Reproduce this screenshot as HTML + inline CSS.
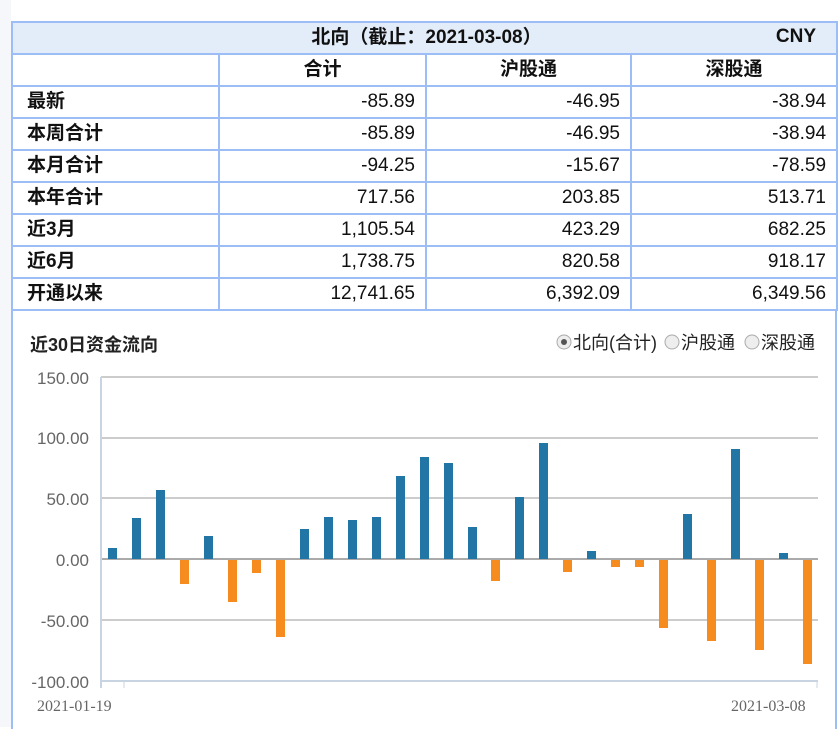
<!DOCTYPE html>
<html><head><meta charset="utf-8"><style>
body{margin:0;width:840px;height:727px;background:#fff;font-family:"Liberation Sans","Noto Sans CJK SC",sans-serif;overflow:hidden;position:relative}
.lft{position:absolute;left:0;top:0;width:11px;height:727px;background:#f5f7fb}
table{position:absolute;left:11px;top:21px;border-collapse:collapse;width:825px;table-layout:fixed;font-size:19px;color:#111}
td{border:2px solid #9cbdf5;height:32px;padding:0 10px;text-align:right;box-sizing:border-box;line-height:28px;white-space:nowrap}
td:first-child{text-align:left;font-weight:bold;padding-left:14px}
.h td{background:#e3ecf9;font-weight:bold;font-size:19px}
.c td{text-align:center;font-weight:bold}
.box{position:absolute;left:11px;top:309px;width:822px;height:420px;border-left:2px solid #9cbdf5;border-right:2px solid #9cbdf5}
</style></head><body>
<div class="lft"></div>
<table>
<colgroup><col style="width:207px"><col style="width:207px"><col style="width:205px"><col style="width:206px"></colgroup>
<tr class="h"><td colspan="4" style="text-align:center;position:relative">北向（截止：2021-03-08）<span style="position:absolute;right:20px;top:0">CNY</span></td></tr>
<tr class="c"><td></td><td style="text-align:center">合计</td><td style="text-align:center">沪股通</td><td style="text-align:center">深股通</td></tr>
<tr><td>最新</td><td>-85.89</td><td>-46.95</td><td>-38.94</td></tr>
<tr><td>本周合计</td><td>-85.89</td><td>-46.95</td><td>-38.94</td></tr>
<tr><td>本月合计</td><td>-94.25</td><td>-15.67</td><td>-78.59</td></tr>
<tr><td>本年合计</td><td>717.56</td><td>203.85</td><td>513.71</td></tr>
<tr><td>近3月</td><td>1,105.54</td><td>423.29</td><td>682.25</td></tr>
<tr><td>近6月</td><td>1,738.75</td><td>820.58</td><td>918.17</td></tr>
<tr><td>开通以来</td><td>12,741.65</td><td>6,392.09</td><td>6,349.56</td></tr>
</table>
<div class="box"></div>
<svg style="position:absolute;left:0;top:0" width="840" height="727" font-family="Liberation Sans,Noto Sans CJK SC,sans-serif">
<text x="30" y="351" font-size="18" font-weight="bold" fill="#222">近30日资金流向</text>
<circle cx="564" cy="342" r="7" fill="#eee" stroke="#aaa"/><circle cx="564" cy="342" r="3" fill="#555"/>
<text x="573" y="349" font-size="18" fill="#222">北向(合计)</text>
<circle cx="672" cy="342" r="7" fill="#eee" stroke="#aaa"/>
<text x="681" y="349" font-size="18" fill="#222">沪股通</text>
<circle cx="752" cy="342" r="7" fill="#eee" stroke="#aaa"/>
<text x="761" y="349" font-size="18" fill="#222">深股通</text>
<g stroke="#ccc" stroke-width="2">
<line x1="101" y1="377" x2="818" y2="377"/><line x1="101" y1="438" x2="818" y2="438"/>
<line x1="101" y1="498" x2="818" y2="498"/><line x1="101" y1="620" x2="818" y2="620"/>
</g>
<line x1="101" y1="559" x2="818" y2="559" stroke="#aaa" stroke-width="2"/>
<line x1="101" y1="681" x2="818" y2="681" stroke="#c8d4e2" stroke-width="2"/>
<line x1="101" y1="377" x2="101" y2="688" stroke="#c8d4e2" stroke-width="2"/>
<line x1="124" y1="681" x2="124" y2="688" stroke="#c8d4e2"/><line x1="817" y1="681" x2="817" y2="688" stroke="#c8d4e2"/>
<g font-size="17" fill="#666" text-anchor="end">
<text x="89" y="384">150.00</text><text x="89" y="444">100.00</text><text x="89" y="505">50.00</text>
<text x="89" y="566">0.00</text><text x="89" y="627">-50.00</text><text x="89" y="688">-100.00</text>
</g>
<g font-family="Liberation Serif,serif" font-size="16" fill="#666">
<text x="37" y="711">2021-01-19</text><text x="731" y="711">2021-03-08</text>
</g>
<g fill="#2176a5">
<rect x="108" y="548" width="9" height="11"/><rect x="132" y="518" width="9" height="41"/>
<rect x="156" y="490" width="9" height="69"/><rect x="204" y="536" width="9" height="23"/>
<rect x="300" y="529" width="9" height="30"/><rect x="324" y="517" width="9" height="42"/>
<rect x="348" y="520" width="9" height="39"/><rect x="372" y="517" width="9" height="42"/>
<rect x="396" y="476" width="9" height="83"/><rect x="420" y="457" width="9" height="102"/>
<rect x="444" y="463" width="9" height="96"/><rect x="468" y="527" width="9" height="32"/>
<rect x="515" y="497" width="9" height="62"/><rect x="539" y="443" width="9" height="116"/>
<rect x="587" y="551" width="9" height="8"/><rect x="683" y="514" width="9" height="45"/>
<rect x="731" y="449" width="9" height="110"/><rect x="779" y="553" width="9" height="6"/>
</g>
<g fill="#f68b1f">
<rect x="180" y="560" width="9" height="24"/><rect x="228" y="560" width="9" height="42"/>
<rect x="252" y="560" width="9" height="13"/><rect x="276" y="560" width="9" height="77"/>
<rect x="491" y="560" width="9" height="21"/><rect x="563" y="560" width="9" height="12"/>
<rect x="611" y="560" width="9" height="7"/><rect x="635" y="560" width="9" height="7"/>
<rect x="659" y="560" width="9" height="68"/><rect x="707" y="560" width="9" height="81"/>
<rect x="755" y="560" width="9" height="90"/><rect x="803" y="560" width="9" height="104"/>
</g>
</svg>
</body></html>
